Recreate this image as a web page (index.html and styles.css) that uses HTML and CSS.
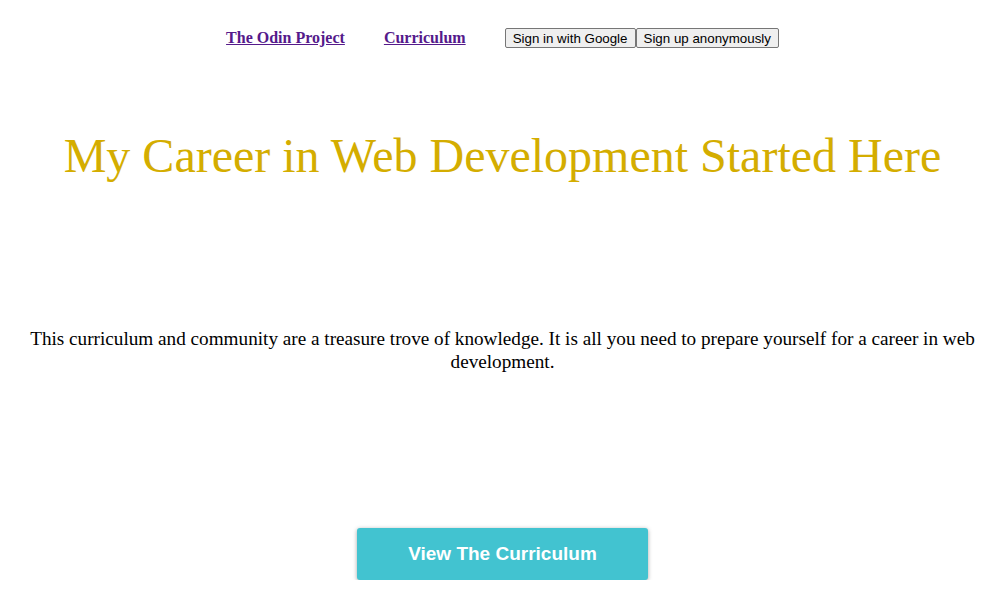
FILE: index.html
```html
<!DOCTYPE html>
<html>
<head>
<meta charset="utf-8">
<link rel="stylesheet" href="styles.css">
</head>
<body>
<nav class="nav">
  <a class="nav-link" href="#">The Odin Project</a>
  <a class="nav-link" href="#">Curriculum</a>
  <div class="auth">
    <button class="auth-btn">Sign in with Google</button><button class="auth-btn">Sign up anonymously</button>
  </div>
</nav>
<main class="hero">
  <h1 class="title">My Career in Web Development Started Here</h1>
  <p class="lead">This curriculum and community are a treasure trove of knowledge. It is all you need to prepare yourself for a career in web development.</p>
  <button class="cta">View The Curriculum</button>
</main>
</body>
</html>
```
FILE: styles.css
```css
html, body {
  margin: 0;
  padding: 0;
  background: #fff;
}
body {
  font-family: "Liberation Serif", "Times New Roman", serif;
  padding: 0 8px;
}
.nav {
  display: flex;
  justify-content: center;
  align-items: baseline;
  gap: 39px;
  padding-top: 28px;
}
.nav-link {
  font-weight: bold;
  font-size: 16px;
  color: #551a8b;
}
.auth {
  display: flex;
}
.auth-btn {
  font-family: "Liberation Sans", Arial, sans-serif;
  font-size: 13.33px;
  height: 20px;
  padding: 1px 7px;
  margin: 0;
  border: 1px solid #767676;
  border-radius: 2px;
  background: #efefef;
  color: #000;
}
.hero {
  display: flex;
  flex-direction: column;
  align-items: center;
  text-align: center;
}
.title {
  margin: 80px 0 0;
  font-size: 48px;
  font-weight: normal;
  color: #d4ad00;
}
.lead {
  margin: 144px 0 0;
  font-size: 19.2px;
  line-height: 23px;
}
.cta {
  margin-top: 155px;
  width: 291px;
  height: 52px;
  border: none;
  border-radius: 3px;
  background: #42c3d0;
  color: #fff;
  font-family: "Liberation Sans", Arial, sans-serif;
  font-weight: bold;
  font-size: 19px;
  box-shadow: 0 1px 4px rgba(0,0,0,0.35);
}
```
